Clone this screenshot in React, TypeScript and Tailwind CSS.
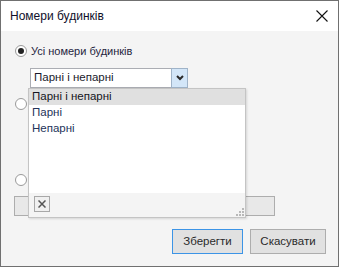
import React from "react";

function Radio({ checked }: { checked?: boolean }) {
  return (
    <span className="w-[12px] h-[12px] rounded-full border border-[#9a9a9a] bg-white flex items-center justify-center shrink-0">
      {checked && <span className="w-[6px] h-[6px] rounded-full bg-[#222]" />}
    </span>
  );
}

const ITEMS = ["Парні і непарні", "Парні", "Непарні"];

export default function App() {
  return (
    <div className="w-[339px] h-[267px] flex flex-col border border-[#707070] bg-[#f4f4f4] font-['Liberation_Sans',sans-serif] text-[11px] leading-none select-none">
      {/* Title bar */}
      <div className="h-[30px] bg-white flex items-center justify-between pl-[9px] pr-[10px] shrink-0">
        <span className="text-[12px] text-[#10102a]">Номери будинків</span>
        <svg width="12" height="12" viewBox="0 0 12 12">
          <path d="M0.5 0.5 L11.5 11.5 M11.5 0.5 L0.5 11.5" stroke="#111" strokeWidth="1.1" />
        </svg>
      </div>

      {/* Body */}
      <div className="relative flex-1 flex flex-col pl-[13px] pr-[12px]">
        <div className="h-[16px] mt-[12px] ml-[1px] flex items-center gap-[4px]">
          <Radio checked />
          <span className="text-[#252540]">Усі номери будинків</span>
        </div>

        {/* Combo */}
        <div className="mt-[9px] ml-[16px] w-[158px] h-[20px] flex border border-[#abadb3] bg-white">
          <div className="flex-1 flex items-center pl-[3px] text-[11.5px] text-[#1a1a2a]">Парні і непарні</div>
          <div className="w-[17px] -my-[1px] -mr-[1px] border border-[#9fb3c8] bg-[#d3e6f8] flex items-center justify-center">
            <svg width="8" height="6" viewBox="0 0 8 6">
              <path d="M1 1 L4 4 L7 1" stroke="#2a2a2a" strokeWidth="2" fill="none" />
            </svg>
          </div>
        </div>

        <div className="mt-[10px] ml-[1px] h-[12px] flex items-center">
          <Radio />
        </div>

        <div className="mt-[64px] ml-[1px] h-[12px] flex items-center">
          <Radio />
        </div>

        <div className="mt-[10px] w-[261px] h-[20px] border border-[#adadad] bg-[#e8e8e8]" />

        <div className="mt-[13px] flex justify-end gap-[7px]">
          <button className="w-[71px] h-[25px] border border-[#3c94e6] bg-[#e1e1e1] text-[#2a2a2a] text-[11.5px]">
            Зберегти
          </button>
          <button className="w-[76px] h-[25px] border border-[#adadad] bg-[#e1e1e1] text-[#2a2a2a] text-[11.5px]">
            Скасувати
          </button>
        </div>

        {/* Dropdown popup */}
        <div className="absolute left-[27px] top-[57px] w-[218px] h-[130px] flex flex-col border border-[#c4c4c4] bg-white shadow-[1px_1px_2px_rgba(0,0,0,0.12)]">
          <div className="flex-1 flex flex-col text-[11.5px]">
            {ITEMS.map((t, i) => (
              <div
                key={t}
                className={
                  i === 0
                    ? "h-[16px] flex items-center pl-[3px] bg-[#e0e0e0] text-[#151520]"
                    : "h-[16px] flex items-center pl-[3px] text-[#23335a]"
                }
              >
                {t}
              </div>
            ))}
          </div>
          <div className="relative h-[24px] bg-[#f4f4f4] flex items-start pl-[5px] pt-[3px]">
            <div className="w-[16px] h-[16px] border border-[#a8a8a8] bg-[#f0f0f0] flex items-center justify-center">
              <svg width="8" height="8" viewBox="0 0 8 8">
                <path d="M0.5 0.5 L7.5 7.5 M7.5 0.5 L0.5 7.5" stroke="#555" strokeWidth="1.5" />
              </svg>
            </div>
            <svg className="absolute right-[1px] bottom-[1px]" width="8" height="8" viewBox="0 0 8 8">
              <rect x="6" y="0" width="2" height="2" fill="#b8b8b8" />
              <rect x="3" y="3" width="2" height="2" fill="#b8b8b8" />
              <rect x="6" y="3" width="2" height="2" fill="#b8b8b8" />
              <rect x="0" y="6" width="2" height="2" fill="#b8b8b8" />
              <rect x="3" y="6" width="2" height="2" fill="#b8b8b8" />
              <rect x="6" y="6" width="2" height="2" fill="#b8b8b8" />
            </svg>
          </div>
        </div>
      </div>
    </div>
  );
}
